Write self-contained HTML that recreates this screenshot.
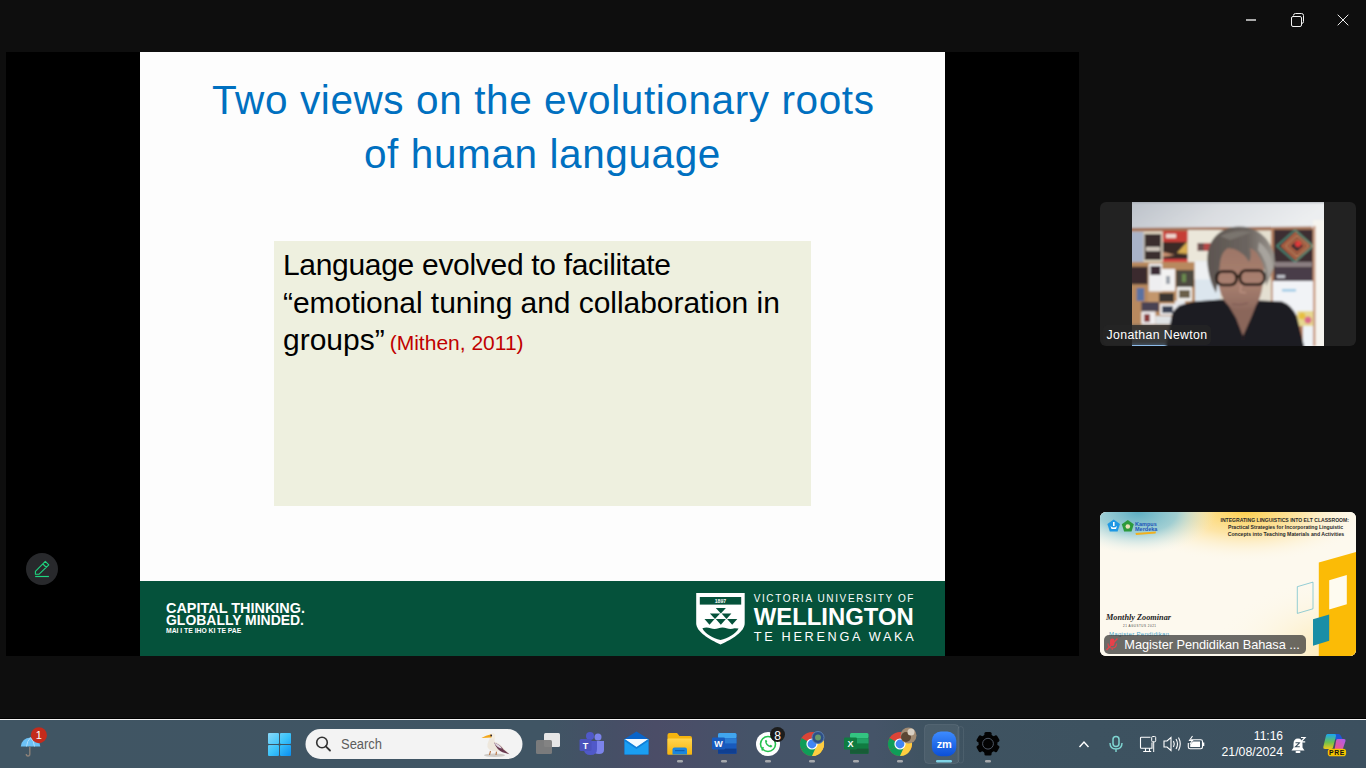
<!DOCTYPE html>
<html><head><meta charset="utf-8">
<style>
*{margin:0;padding:0;box-sizing:border-box}
html,body{width:1366px;height:768px;overflow:hidden;background:#0e0e0e;font-family:"Liberation Sans",sans-serif}
.abs{position:absolute}
#video{left:6px;top:52px;width:1073px;height:604px;background:#000}
#slide{left:140px;top:52px;width:805px;height:604px;background:#fdfdfd;overflow:hidden}
#footer{left:0;top:529px;width:805px;height:75px;background:#05523b}
.title{color:#0070c0;font-size:40.5px;letter-spacing:0.6px;white-space:nowrap;line-height:1}
#box{left:134px;top:189px;width:537px;height:265px;background:#eef0df}
.body{color:#000;font-size:30px;white-space:nowrap;line-height:1}
#tb{left:0;top:720px;width:1366px;height:48px;background:linear-gradient(90deg,#405563 0%,#405564 40%,#464f66 45%,#4b4d67 48%,#494f68 51%,#455368 55%,#455468 64%,#3f5361 68%,#3d5260 80%,#3c505f 100%)}
.tile{background:#222;border-radius:6px;overflow:hidden}
</style></head><body>
<!-- window controls -->
<div class="abs" style="left:1246px;top:19px;width:10px;height:2px;background:#a8a8a8"></div>
<svg class="abs" style="left:1288px;top:11px" width="18" height="18" viewBox="0 0 18 18"><rect x="3.5" y="5.5" width="10" height="10" rx="1.5" fill="none" stroke="#f2f2f2" stroke-width="1"/><path d="M5.5 4.5 A2 2 0 0 1 7.5 2.5 H13.5 A2 2 0 0 1 15.5 4.5 V10.5 A2 2 0 0 1 13.5 12.5" fill="none" stroke="#f2f2f2" stroke-width="1"/></svg>
<svg class="abs" style="left:1337px;top:14px" width="12" height="12" viewBox="0 0 12 12"><path d="M0.7 0.7L11.3 11.3M11.3 0.7L0.7 11.3" stroke="#eee" stroke-width="1"/></svg>

<div id="video" class="abs"></div>
<div id="slide" class="abs">
  <div class="abs title" style="left:72px;top:28px">Two views on the evolutionary roots</div>
  <div class="abs title" style="left:224px;top:82px">of human language</div>
  <div id="box" class="abs">
    <div class="abs body" style="left:9px;top:9px;letter-spacing:-0.31px">Language evolved to facilitate</div>
    <div class="abs body" style="left:9px;top:47px;letter-spacing:-0.05px">“emotional tuning and collaboration in</div>
    <div class="abs body" style="left:9px;top:84px">groups”<span style="color:#c00000;font-size:21px;margin-left:5px">(Mithen, 2011)</span></div>
  </div>
  <div id="footer" class="abs">
    <svg class="abs" style="left:0;top:0" width="805" height="75" viewBox="0 0 805 75">
      <g fill="#fff" font-family="Liberation Sans" font-weight="bold">
        <text x="26" y="32" font-size="14.4" textLength="139" lengthAdjust="spacingAndGlyphs">CAPITAL THINKING.</text>
        <text x="26" y="44.4" font-size="14.4" textLength="138" lengthAdjust="spacingAndGlyphs">GLOBALLY MINDED.</text>
        <text x="26" y="52" font-size="7" textLength="75.3" lengthAdjust="spacingAndGlyphs">MAI I TE IHO KI TE PAE</text>
        <text x="613.7" y="21.3" font-size="10" font-weight="normal" textLength="159.7" lengthAdjust="spacing">VICTORIA UNIVERSITY OF</text>
        <text x="613.7" y="44.2" font-size="23" textLength="160" lengthAdjust="spacingAndGlyphs">WELLINGTON</text>
        <text x="613.7" y="60.1" font-size="12.7" font-weight="normal" textLength="160" lengthAdjust="spacing">TE HERENGA WAKA</text>
      </g>
      <g transform="translate(550,7)">
        <path d="M6.2 5 H54.7 V35 C54.7 44 42 51 30.5 56.6 C19 51 6.2 44 6.2 35 Z" fill="#fff"/>
        <rect x="9.8" y="9" width="41.4" height="7.6" fill="#05523b"/>
        <text x="30.5" y="14.6" font-size="5.2" font-weight="bold" fill="#fff" text-anchor="middle" font-family="Liberation Sans">1897</text>
        <path d="M25.8 19.9H35.9L30.85 25.4ZM19.9 25.4H30.1L25 30.9ZM31.6 25.4H41.4L36.5 30.9ZM14.5 30.9H24.6L19.5 36.7ZM25.8 30.9H35.9L30.85 36.7ZM37.1 30.9H47.3L42.2 36.7Z" fill="#05523b"/>
        <path d="M12.5 40.2 Q16.5 38.6 20.5 40.2 T28.5 40.2 T36.5 40.2 T44.5 40.2 L48.5 40.5 C46 46 38 50 30.5 52 C23 50 15 46 12.5 40.5 Z" fill="#05523b"/>
      </g>
    </svg>
  </div>
</div>

<!-- pencil button -->
<div class="abs" style="left:26px;top:553px;width:32px;height:32px;border-radius:50%;background:#28292c"></div>
<svg class="abs" style="left:20px;top:547px" width="44" height="44" viewBox="0 0 44 44"><path d="M15.4 27.3 L15.4 24.3 L25.3 14.4 L28.8 17.9 L18.9 27.3 Z M22.9 17 L26.4 20.5" fill="none" stroke="#1fd57f" stroke-width="1.1" stroke-linejoin="round"/><path d="M15.2 29.5 H28.9" stroke="#1fd57f" stroke-width="1.2"/></svg>

<!-- tiles -->
<div class="abs tile" style="left:1100px;top:202px;width:256px;height:144px">
  <svg class="abs" style="left:32px;top:0" width="192" height="144" viewBox="0 0 192 144">
    <defs>
      <linearGradient id="ceil" x1="0" y1="0" x2="1" y2="0.2"><stop offset="0" stop-color="#b9bfc7"/><stop offset="0.5" stop-color="#d9dce0"/><stop offset="1" stop-color="#eceef0"/></linearGradient>
      <filter id="bl" x="-5%" y="-5%" width="110%" height="110%"><feGaussianBlur stdDeviation="1.2"/></filter>
      <linearGradient id="face" x1="0" y1="0" x2="0" y2="1"><stop offset="0" stop-color="#9c7566"/><stop offset="0.6" stop-color="#a98070"/><stop offset="1" stop-color="#8d6a5e"/></linearGradient>
      <linearGradient id="hair" x1="0" y1="0" x2="1" y2="0"><stop offset="0" stop-color="#5c5550"/><stop offset="0.6" stop-color="#6c6560"/><stop offset="1" stop-color="#9c9790"/></linearGradient>
    </defs>
    <g filter="url(#bl)">
    <rect x="-4" y="-4" width="200" height="152" fill="#e4dfd2"/>
    <rect x="-4" y="-4" width="200" height="30" fill="url(#ceil)"/>
    <rect x="-4" y="-4" width="200" height="4.5" fill="#9a9fa6"/>
    <path d="M-4 26 L180 24.5 L180 28.5 L-4 29.5Z" fill="#a26e52"/>
    <!-- left board top -->
    <rect x="-4" y="30" width="16" height="30" fill="#a9b3c8"/>
    <rect x="11.5" y="30" width="19" height="31" fill="#e2d8c2"/>
    <rect x="12.6" y="32" width="16.5" height="26" fill="#3a2e2e"/>
    <rect x="14" y="45" width="14" height="4" fill="#cfc6bc"/>
    <rect x="30.8" y="29" width="25" height="11" fill="#c63c36"/>
    <rect x="34" y="32" width="10" height="4" fill="#f0d8d0"/>
    <rect x="30.8" y="40" width="25" height="17" fill="#3a2c26"/>
    <path d="M45 51 L55.8 39 L55.8 52Z" fill="#d8ac50"/>
    <path d="M31 50 L43 53 L31 55Z" fill="#c89070"/>
    <rect x="30.8" y="57" width="25" height="5.5" fill="#d44040"/>
    <rect x="30.8" y="62" width="25" height="3" fill="#f2eeea"/>
    <rect x="55.8" y="28" width="36" height="32" fill="#ebe7da"/>
    <rect x="65.7" y="41" width="13" height="8" fill="#b64a4a"/>
    <rect x="65.7" y="41" width="6" height="8" fill="#6a5050"/>
    <!-- lower left board -->
    <rect x="-4" y="60" width="67" height="84" fill="#b8895f"/>
    <rect x="-4" y="64.7" width="19.7" height="17.6" fill="#3b2c2e"/>
    <rect x="16.75" y="61.5" width="13.5" height="28" fill="#eeeef0"/>
    <rect x="18.5" y="64" width="10" height="9" fill="#3a2c34"/>
    <rect x="29" y="67" width="14" height="22" fill="#f2f2f2"/>
    <rect x="34" y="74" width="4" height="8" fill="#9aa0a8"/>
    <rect x="44" y="68" width="18" height="17" fill="#4d4a40"/>
    <rect x="50" y="72" width="4" height="8" fill="#6a8a50"/>
    <rect x="4.7" y="86" width="7.5" height="13" fill="#5a72a2"/>
    <rect x="16" y="90" width="28" height="13" fill="#c3966c"/>
    <rect x="27" y="91" width="15" height="9" fill="#3a3630"/>
    <rect x="45" y="85" width="15" height="14" fill="#efeeea"/>
    <rect x="47" y="88" width="11" height="8" fill="#6a5e48"/>
    <rect x="9.4" y="100" width="17.6" height="9.5" fill="#4a4252"/>
    <rect x="28" y="102" width="15" height="11" fill="#eeeef0"/>
    <rect x="30" y="104" width="11" height="7" fill="#3a4254"/>
    <rect x="43" y="99" width="10" height="13" fill="#e6e8ec"/>
    <rect x="9.4" y="109.5" width="14" height="13" fill="#f0eef0"/>
    <rect x="12" y="112" width="6" height="8" fill="#8a3a3a"/>
    <rect x="23.4" y="114" width="16" height="8.6" fill="#dfe2e4"/>
    <rect x="-4" y="122.6" width="60" height="6" fill="#7a6a5a"/>
    <rect x="-4" y="128" width="60" height="22" fill="#6b6f72"/>
    <rect x="63" y="59" width="25" height="45" fill="#dce6ee"/>
    <rect x="62.6" y="59.5" width="16" height="18" fill="#eef0f2"/>
    <!-- cream wall behind head -->
    <rect x="88" y="28.5" width="54" height="60" fill="#e4dfcf"/>
    <!-- right poster -->
    <rect x="139" y="26" width="44" height="118" fill="#b88262"/>
    <rect x="141.8" y="27.5" width="39" height="52" fill="#3c2e30"/>
    <g fill="none" stroke-width="1.3">
      <path d="M165 30 L180 44 L165 58 L150 44Z" stroke="#e0784c"/>
      <path d="M165 33.5 L176.5 44 L165 54.5 L153.5 44Z" stroke="#e89464"/>
      <path d="M165 37 L173 44 L165 51 L157 44Z" stroke="#e0784c"/>
      <path d="M163 28 L181 44 L163 60 L145 44Z" stroke="#4c9a84"/>
    </g>
    <circle cx="166" cy="42" r="3" fill="#e03a3a"/>
    <rect x="143" y="60" width="37" height="5" fill="#8a7e80"/>
    <rect x="143" y="66" width="37" height="13" fill="#4a3c48"/>
    <rect x="145" y="73" width="8" height="3" fill="#c0c0c8"/>
    <rect x="140.6" y="79" width="41" height="34" fill="#f1f3f6"/>
    <rect x="150" y="87" width="14" height="2.5" fill="#9ccbe6"/>
    <rect x="181" y="18" width="15" height="132" fill="#f6f4ef"/>
    <rect x="181" y="24" width="2.5" height="120" fill="#c99a80"/>
    <rect x="165" y="109" width="16" height="15" fill="#e6d890"/>
    <circle cx="170" cy="114" r="3.5" fill="#e6c040"/>
    <circle cx="176" cy="118" r="3.5" fill="#dc6a8a"/>
    <rect x="171" y="124" width="10" height="26" fill="#eef2f6"/>
    <!-- person: shirt -->
    <path d="M32.5 150 L40.3 111.4 Q44 104 52 102 L62 99.5 L88 97.5 L128 98.5 L150 99.5 Q160 103 165 115 L173.5 150Z" fill="#1f1b24"/>
    <path d="M92 96 L127 96 L119 116 L111 134 L104 116Z" fill="#8a665a"/>
    <path d="M104 120 Q110 132 111 138 Q114 130 118 120" fill="none" stroke="#2a2220" stroke-width="0.8"/>
    <!-- face -->
    <path d="M85 58 Q84 92 96 103 Q108 111 122 105 Q132 96 132 62 Q130 43 108 42 Q86 43 85 58Z" fill="url(#face)"/>
    <path d="M110 78 L108 90 L114 91" fill="none" stroke="#c49888" stroke-width="1"/>
    <path d="M100 102 Q108 104 116 101" stroke="#7a5650" stroke-width="1" fill="none"/>
    <!-- hair -->
    <path d="M76 67 Q72 40 90 29 Q103 22 118 26 Q136 32 142 52 L143 62 Q140 72 134 84 Q134 66 128 56 Q124 48 118 46 Q120 56 117 60 Q110 47 96 46 Q89 50 88 62 Q86 80 84 91 Q78 80 76 67Z" fill="url(#hair)"/>
    <path d="M88 34 Q104 27 120 30 Q110 34 98 38Z" fill="#7a746e"/>
    <path d="M127 40 Q140 50 141 66 L136 76 Q136 60 126 48Z" fill="#a8a49e"/>
    <!-- glasses -->
    <g fill="none" stroke="#1c1210" stroke-width="2.6">
      <rect x="84.5" y="69.5" width="20" height="13.5" rx="6"/>
      <rect x="108" y="68.5" width="24.5" height="14" rx="6"/>
    </g>
    <path d="M104.5 74 L108 74" stroke="#1c1210" stroke-width="2"/>
    <rect x="-4" y="141.8" width="37.5" height="8" fill="#8fc0ee"/>
    </g>
  </svg>
  <div class="abs" style="left:3px;top:123px;width:108px;height:20px;border-radius:5px;background:rgba(38,38,38,0.72)"></div>
  <div class="abs" style="left:6.5px;top:125px;font-size:12.3px;line-height:16px;color:#fff;white-space:nowrap;letter-spacing:0.35px">Jonathan Newton</div>
</div>
<div class="abs tile" style="left:1100px;top:512px;width:256px;height:144px;background:#fdf9ee">
  <svg class="abs" style="left:0;top:0" width="256" height="144" viewBox="0 0 256 144" font-family="Liberation Sans">
    <defs>
      <radialGradient id="tealg" gradientUnits="userSpaceOnUse" cx="38" cy="0" r="60" gradientTransform="translate(38,0) scale(1.3,0.7) translate(-38,0)"><stop offset="0" stop-color="#5eaec2"/><stop offset="0.5" stop-color="#90c8d2" stop-opacity="0.85"/><stop offset="1" stop-color="#e8f2ee" stop-opacity="0"/></radialGradient>
      <radialGradient id="yelg" gradientUnits="userSpaceOnUse" cx="145" cy="0" r="100" gradientTransform="translate(145,0) scale(1.25,0.5) translate(-145,0)"><stop offset="0" stop-color="#fccf50"/><stop offset="0.45" stop-color="#fde19a" stop-opacity="0.85"/><stop offset="1" stop-color="#fdf9ee" stop-opacity="0"/></radialGradient>
      <radialGradient id="yelg2" cx="0.95" cy="0.95" r="0.5"><stop offset="0" stop-color="#fde6a8"/><stop offset="1" stop-color="#fdf9ee" stop-opacity="0"/></radialGradient>
    </defs>
    <rect width="256" height="144" fill="#fdf9ee"/>
    <rect width="256" height="144" fill="url(#yelg2)"/>
    <rect width="256" height="144" fill="url(#yelg)"/>
    <rect width="256" height="144" fill="url(#tealg)"/>
    <path d="M13.7 7.5 L20 12 L17.6 19.5 L9.8 19.5 L7.4 12Z" fill="#1e98e4"/>
    <path d="M10.5 14 Q13.7 17 17 14 L16 17 L11.5 17Z" fill="#fff"/><rect x="13" y="10" width="1.6" height="4" fill="#fff"/>
    <path d="M27.8 8 L33.8 12.3 L31.5 19.5 L24.1 19.5 L21.8 12.3Z" fill="#2c9a3c"/>
    <circle cx="27.8" cy="14.5" r="2.3" fill="#e8e0b8"/>
    <text x="35" y="14" font-size="5.5" font-weight="bold" fill="#1d55b8">Kampus</text>
    <text x="35" y="19" font-size="5.5" font-weight="bold" fill="#1d55b8">Merdeka</text>
    <path d="M35.5 21 L56 19.5 L55.5 21.5 L36 23Z" fill="#f2b01e"/>
    <g fill="#2a2a2a" font-weight="bold">
      <text x="120.5" y="10" font-size="4.6" textLength="128.5" lengthAdjust="spacingAndGlyphs">INTEGRATING LINGUISTICS INTO ELT CLASSROOM:</text>
      <text x="128" y="17.3" font-size="4.6" textLength="115" lengthAdjust="spacingAndGlyphs">Practical Strategies for Incorporating Linguistic</text>
      <text x="127.7" y="24.4" font-size="4.6" textLength="116.5" lengthAdjust="spacingAndGlyphs">Concepts into Teaching Materials and Activities</text>
    </g>
    <path d="M218.8 50.6 L256 40 V144 H218.8Z" fill="#fbbb06"/>
    <path d="M229.2 68.2 L246.8 63 V92.3 L229.2 97.5Z" fill="#fefbf0"/>
    <path d="M213 107.2 L229.2 102.4 V128.7 L213 133.8Z" fill="#1a8ea6"/>
    <path d="M197.3 74.7 L213 70.1 V96.8 L197.3 101.4Z" fill="none" stroke="#4eb0c4" stroke-width="0.6"/>
    <text x="6" y="108" font-size="8.5" font-weight="bold" font-style="italic" fill="#222" textLength="65" lengthAdjust="spacingAndGlyphs" font-family="Liberation Serif">Monthly Zoominar</text>
    <text x="23" y="115" font-size="3" fill="#444" textLength="33">21 AGUSTUS 2021</text>
    <text x="9" y="124" font-size="6" fill="#4aa3c8" textLength="60">Magister Pendidikan</text>
  </svg>
  <div class="abs" style="left:3.5px;top:122.5px;width:202.5px;height:19.5px;border-radius:5px;background:rgba(50,50,50,0.72)"></div>
  <svg class="abs" style="left:5px;top:125px" width="14" height="14" viewBox="0 0 14 14"><rect x="5" y="1.5" width="4.5" height="7.5" rx="2.2" fill="#e8414a"/><path d="M3 6.5 Q3 11 7.2 11 Q11.5 11 11.5 6.5 M7.2 11 V13" stroke="#e8414a" stroke-width="1.1" fill="none"/><path d="M1.5 13 L12.5 1.5" stroke="#e8414a" stroke-width="1.3"/></svg>
  <svg class="abs" style="left:0;top:0" width="256" height="144"><text x="24.3" y="137.4" font-family="Liberation Sans" font-size="12.8" fill="#fff" textLength="175.5" lengthAdjust="spacing">Magister Pendidikan Bahasa ...</text></svg>
</div>

<div id="tb" class="abs"></div>
<div class="abs" style="left:0;top:718px;width:1366px;height:1px;background:#000"></div>
<div class="abs" style="left:0;top:719px;width:1366px;height:1px;background:#f4f4f4"></div>
<svg class="abs" style="left:0;top:719px" width="1366" height="49" viewBox="0 719 1366 49" font-family="Liberation Sans">
  <defs>
    <linearGradient id="win" gradientUnits="userSpaceOnUse" x1="268" y1="733" x2="291" y2="756"><stop offset="0" stop-color="#8ad8f8"/><stop offset="0.5" stop-color="#3cc4fa"/><stop offset="1" stop-color="#0a8ef0"/></linearGradient>
    <linearGradient id="fold" x1="0" y1="0" x2="0" y2="1"><stop offset="0" stop-color="#ffd54f"/><stop offset="1" stop-color="#f6b40e"/></linearGradient>
    <linearGradient id="zmg" x1="0" y1="0" x2="0" y2="1"><stop offset="0" stop-color="#3d8bff"/><stop offset="1" stop-color="#0b4fd6"/></linearGradient>
    <linearGradient id="cop" x1="0" y1="0" x2="1" y2="1"><stop offset="0" stop-color="#27c8f5"/><stop offset="0.45" stop-color="#7ed957"/><stop offset="0.7" stop-color="#f3b52a"/><stop offset="1" stop-color="#e0479e"/></linearGradient>
  </defs>
  <!-- weather umbrella -->
  <path d="M20.8 746.5 Q22 738 30.5 737.6 Q39 738 40.3 746.5 Z" fill="#6cc1f5"/>
  <path d="M30.5 737.6 Q27 741 26.5 746.5 M30.5 737.6 Q34 741 34.5 746.5" stroke="#bfe4fb" stroke-width="0.8" fill="none"/>
  <path d="M29.8 746.5 V754 Q29.8 756 28 756 Q26.3 756 26.3 754" stroke="#8a8078" stroke-width="1.4" fill="none"/>
  <circle cx="38.9" cy="735.2" r="8" fill="#c42b1c"/>
  <text x="38.9" y="739.3" font-size="11" fill="#fff" text-anchor="middle">1</text>
  <!-- windows logo -->
  <g fill="url(#win)"><rect x="268" y="733" width="11" height="11" rx="1"/><rect x="280" y="733" width="11" height="11" rx="1"/><rect x="268" y="745" width="11" height="11" rx="1"/><rect x="280" y="745" width="11" height="11" rx="1"/></g>
  <!-- search -->
  <rect x="305.5" y="729" width="217" height="30" rx="15" fill="#f3f3f3"/>
  <circle cx="322" cy="742.5" r="5.3" fill="none" stroke="#333" stroke-width="1.6"/>
  <path d="M325.8 746.3 L330 750.5" stroke="#333" stroke-width="1.8" stroke-linecap="round"/>
  <text x="341" y="749.4" font-size="14" fill="#5c5c5c" textLength="41" lengthAdjust="spacingAndGlyphs">Search</text>
  <!-- bird -->
  <ellipse cx="494.5" cy="755.3" rx="10.5" ry="1.7" fill="#cfcbc6"/>
  <path d="M490.5 751 L489.5 754.8 M496.5 751.5 L496 755" stroke="#b8703e" stroke-width="1.1"/>
  <path d="M490.2 737 Q488.5 741 487.5 744 Q486.5 749.5 493 751 Q499 752 503 750.5 L509.5 754.3 L504.5 749 Q500.5 743.5 494.5 741.5 L494.8 737Z" fill="#eee7dc"/>
  <path d="M494 742.5 Q500.5 744.5 503.5 749.5 L509.5 754.3 L502.5 752.2 Q497 750 494 742.5Z" fill="#6a3a50"/>
  <path d="M494 742.5 Q500 744.5 502 748.5 Q497 748 494 742.5Z" fill="#ded6e2"/>
  <circle cx="492.6" cy="736" r="2.7" fill="#f3ede2"/>
  <path d="M481.3 738 Q486 735.5 491.2 734.3 L491.6 737.6 Q486 737.8 481.3 738Z" fill="#f3a619"/>
  <circle cx="491.2" cy="735.5" r="0.9" fill="#2a2436"/>
  <!-- task view -->
  <rect x="544" y="733" width="16" height="14" rx="1.5" fill="#e6e6e6"/>
  <rect x="536" y="740" width="16" height="14" rx="1.5" fill="#7d7d7d" opacity="0.95"/>
  <!-- teams -->
  <circle cx="598" cy="737" r="3.5" fill="#7b83eb"/>
  <path d="M592 741 H604 V750 Q604 754 599 754 Q594 754 592 750Z" fill="#7b83eb"/>
  <circle cx="590" cy="736" r="4" fill="#5059c9"/>
  <path d="M584 741 H597 V749 Q597 755 590.5 755 Q584 755 584 749Z" fill="#5059c9"/>
  <rect x="579.5" y="739" width="12" height="12" rx="1.5" fill="#4b53bc"/>
  <text x="585.5" y="748.5" font-size="9" font-weight="bold" fill="#fff" text-anchor="middle">T</text>
  <!-- mail -->
  <path d="M624.5 739 L636.5 731.5 L648.5 739 V754.5 H624.5Z" fill="#0a64c8"/>
  <rect x="624.5" y="739" width="24" height="15.5" fill="#1a9ef2"/>
  <path d="M624.5 739 L636.5 747.5 L648.5 739" fill="#ffffff" opacity="0.95"/>
  <path d="M624.5 739 L636.5 747 L648.5 739 V741 L636.5 749 L624.5 741Z" fill="#0f7fd8"/>
  <!-- explorer -->
  <path d="M667.5 735 Q667.5 733 669.5 733 H677 L679.5 736 H690 Q692 736 692 738 V754.5 H667.5Z" fill="#f5b40f"/>
  <rect x="667.5" y="738.5" width="24.5" height="16" rx="1" fill="url(#fold)"/>
  <path d="M672.5 754.5 V749.5 Q672.5 747.5 674.5 747.5 H685 Q687 747.5 687 749.5 V754.5Z" fill="#1b86de"/><rect x="675" y="750" width="9.5" height="1.2" fill="#0f5fb0"/>
  <rect x="677" y="760" width="6" height="2.5" rx="1.2" fill="#a6a9ad"/>
  <!-- word -->
  <rect x="718" y="733" width="18.5" height="20.7" rx="1.5" fill="#185abd"/>
  <rect x="718" y="733" width="18.5" height="5.2" rx="1.5" fill="#41a5ee"/>
  <rect x="718" y="738.2" width="18.5" height="5.2" fill="#2b7cd3"/>
  <rect x="718" y="748.6" width="18.5" height="5.1" fill="#103f91"/>
  <rect x="712" y="737.5" width="13" height="12" rx="1.2" fill="#185abd"/>
  <text x="718.5" y="747.3" font-size="9" font-weight="bold" fill="#fff" text-anchor="middle">W</text>
  <rect x="721" y="760" width="6" height="2.5" rx="1.2" fill="#a6a9ad"/>
  <!-- whatsapp -->
  <circle cx="768" cy="744" r="12" fill="#ffffff"/>
  <circle cx="768" cy="744" r="7.5" fill="none" stroke="#25c14f" stroke-width="1.6"/>
  <path d="M762 750.5 L763.2 747" stroke="#25c14f" stroke-width="1.6"/>
  <path d="M765 740.5 Q765 746 771 747.5 L772.5 746 L770.7 744.8 L769.6 745.6 Q767.5 744.5 766.6 742.6 L767.3 741.5 L766.2 739.7Z" fill="#25c14f"/>
  <circle cx="777.5" cy="734.5" r="7.5" fill="#1c1c1c"/>
  <text x="777.5" y="739.5" font-size="12" fill="#fff" text-anchor="middle">8</text>
  <rect x="765" y="760" width="6" height="2.5" rx="1.2" fill="#a6a9ad"/>
  <!-- chrome 1 -->
  <g transform="translate(812,744)">
    <circle r="12" fill="#db4437"/>
    <path d="M0 0 L-10.4 6 A12 12 0 0 1 -10.4 -6 Z" fill="#0f9d58"/>
    <path d="M0 0 L-10.4 6 A12 12 0 0 0 10.4 6 Z" fill="#0f9d58"/>
    <path d="M0 0 L10.4 -6 A12 12 0 0 1 10.4 6 L0 12 A12 12 0 0 0 10.4 6Z" fill="#ffcd40"/>
    <path d="M0 -4.6 L10.4 -6 A12 12 0 0 1 0 12 L4 3Z" fill="#ffcd40"/>
    <circle r="5.6" fill="#fff"/><circle r="4.4" fill="#4285f4"/>
  </g>
  <circle cx="818" cy="737.5" r="6" fill="#2e4f86" stroke="#5a7fb0" stroke-width="1"/>
  <circle cx="818" cy="737.5" r="3" fill="#6a9a6a"/>
  <rect x="809" y="760" width="6" height="2.5" rx="1.2" fill="#a6a9ad"/>
  <!-- excel -->
  <rect x="850" y="733" width="18.5" height="20.7" rx="1.5" fill="#107c41"/>
  <rect x="850" y="733" width="18.5" height="5.2" rx="1.5" fill="#33c481"/>
  <rect x="850" y="738.2" width="18.5" height="5.2" fill="#21a366"/>
  <rect x="850" y="748.6" width="18.5" height="5.1" fill="#185c37"/>
  <rect x="844" y="737.5" width="13" height="12" rx="1.2" fill="#107c41"/>
  <text x="850.5" y="747.3" font-size="9" font-weight="bold" fill="#fff" text-anchor="middle">X</text>
  <rect x="853" y="760" width="6" height="2.5" rx="1.2" fill="#a6a9ad"/>
  <!-- chrome 2 -->
  <g transform="translate(900,744)">
    <circle r="12" fill="#db4437"/>
    <path d="M0 0 L-10.4 6 A12 12 0 0 1 -10.4 -6 Z" fill="#0f9d58"/>
    <path d="M0 0 L-10.4 6 A12 12 0 0 0 10.4 6 Z" fill="#0f9d58"/>
    <path d="M0 -4.6 L10.4 -6 A12 12 0 0 1 0 12 L4 3Z" fill="#ffcd40"/>
    <circle r="5.6" fill="#fff"/><circle r="4.4" fill="#4285f4"/>
  </g>
  <circle cx="908.5" cy="735.5" r="8" fill="#a08a72"/><circle cx="906" cy="737" r="5" fill="#5a4634"/>
  <circle cx="911" cy="732" r="3.5" fill="#d8cfc2"/>
  <rect x="897" y="760" width="6" height="2.5" rx="1.2" fill="#a6a9ad"/>
  <!-- zoom active -->
  <rect x="958" y="726.5" width="5.5" height="36.5" rx="3" fill="none" stroke="#ffffff" stroke-opacity="0.07" stroke-width="1"/>
  <rect x="924.5" y="724.5" width="34.5" height="39" rx="4" fill="#ffffff" fill-opacity="0.06" stroke="#ffffff" stroke-opacity="0.08" stroke-width="1"/>
  <rect x="931.9" y="731.6" width="24.4" height="24.6" rx="9" fill="url(#zmg)"/>
  <text x="944.2" y="747.8" font-size="11" font-weight="bold" fill="#fff" text-anchor="middle" letter-spacing="-0.2">zm</text>
  <rect x="936" y="760" width="16" height="2.5" rx="1.2" fill="#7fd3e6"/>
  <!-- settings gear -->
  <g transform="translate(988,743.7)">
    <g fill="#030303">
      <circle r="9.5"/>
      <rect x="-3.6" y="-11.8" width="7.2" height="23.6" rx="1.5"/>
      <rect x="-3.6" y="-11.8" width="7.2" height="23.6" rx="1.5" transform="rotate(60)"/>
      <rect x="-3.6" y="-11.8" width="7.2" height="23.6" rx="1.5" transform="rotate(120)"/>
    </g>
    <circle r="5.4" fill="none" stroke="#56606e" stroke-width="0.9"/>
  </g>
  <rect x="985" y="760" width="6" height="2.5" rx="1.2" fill="#a6a9ad"/>
  <!-- tray -->
  <path d="M1079.5 747 L1084 742 L1088.5 747" fill="none" stroke="#fff" stroke-width="1.4"/>
  <rect x="1113" y="736.5" width="6" height="10" rx="3" fill="none" stroke="#7fd6d2" stroke-width="1.5"/>
  <path d="M1110 743 Q1110 749 1116 749 Q1122 749 1122 743 M1116 749 V752" fill="none" stroke="#7fd6d2" stroke-width="1.4"/>
  <path d="M1150.5 737.2 H1141.2 Q1140.5 737.2 1140.5 738 V747.5 Q1140.5 748.3 1141.2 748.3 H1152 V742.5" fill="none" stroke="#fff" stroke-width="1.1"/>
  <path d="M1145.5 748.3 V751.3 M1149.5 748.3 V751.3 M1143.2 751.5 H1151.2" stroke="#fff" stroke-width="1.1" fill="none"/>
  <rect x="1151.7" y="736.5" width="4" height="5.3" rx="1" fill="none" stroke="#fff" stroke-width="1"/>
  <path d="M1153.7 741.8 V752" stroke="#fff" stroke-width="1"/>
  <path d="M1164 741 H1167 L1171 737.5 V750.5 L1167 747 H1164Z" fill="none" stroke="#fff" stroke-width="1.1"/>
  <path d="M1173.5 741 Q1175 744 1173.5 747 M1176 739 Q1179 744 1176 749 M1178.5 737.5 Q1182 744 1178.5 750.5" fill="none" stroke="#fff" stroke-width="1.1"/>
  <path d="M1191 739.8 H1200.8 Q1202.5 739.8 1202.5 741.5 V747 Q1202.5 748.7 1200.8 748.7 H1190 Q1188.3 748.7 1188.3 747 V743" fill="none" stroke="#fff" stroke-width="1.1"/>
  <rect x="1203" y="742.5" width="1.3" height="3.5" fill="#fff"/>
  <path d="M1193 741.5 H1200 V747 H1190.2 V744.5Z" fill="#fff"/>
  <path d="M1192.5 736 L1189.5 740.5 H1192.5 L1190 744" fill="none" stroke="#fff" stroke-width="1.1"/>
  <text x="1283" y="740" font-size="12" fill="#fff" text-anchor="end">11:16</text>
  <text x="1221.5" y="756.3" font-size="12" fill="#fff" textLength="61.5" lengthAdjust="spacingAndGlyphs">21/08/2024</text>
  <path d="M1291.5 750.5 H1304.5 L1302.5 747.5 V744 Q1302.5 738.5 1298 738.5 Q1293.5 738.5 1293.5 744 V747.5Z" fill="#fff"/>
  <rect x="1295.5" y="751" width="5" height="2" rx="1" fill="#fff"/>
  <path d="M1295.5 742.8 H1299.5 L1295.5 746.8 H1299.8" fill="none" stroke="#3c505f" stroke-width="1.1"/>
  <path d="M1301 737.5 H1305 L1301 741.8 H1305.2" fill="none" stroke="#fff" stroke-width="1.2"/>
  <!-- copilot -->
  <defs>
    <linearGradient id="copL" x1="0" y1="0" x2="0" y2="1"><stop offset="0" stop-color="#19a6f2"/><stop offset="0.55" stop-color="#6cc24f"/><stop offset="1" stop-color="#f0c81a"/></linearGradient>
    <linearGradient id="copR" x1="0" y1="1" x2="1" y2="0"><stop offset="0" stop-color="#f8587c"/><stop offset="1" stop-color="#a95cf2"/></linearGradient>
  </defs>
  <path d="M1331.5 734 H1338.5 Q1340 734 1341 736 L1343 740 H1336Z" fill="#1d56d6"/>
  <path d="M1327.5 734 H1334.5 Q1336.5 734 1336 736 L1333 747.5 Q1332.6 749 1331 749 H1325 Q1322.8 749 1323.3 747 L1326 735.5 Q1326.4 734 1327.5 734Z" fill="url(#copL)"/>
  <path d="M1337.5 739 H1344 Q1346 739 1345.5 741 L1343 748.5 Q1342.6 750 1341 750 H1334.5 L1336 741 Q1336.4 739 1337.5 739Z" fill="url(#copR)"/>
  <rect x="1327.8" y="748.8" width="18.3" height="7.4" rx="2.8" fill="#f5c400"/>
  <text x="1337" y="755.2" font-size="6.8" font-weight="bold" fill="#111" text-anchor="middle" letter-spacing="0.6">PRE</text>
</svg>
</body></html>
